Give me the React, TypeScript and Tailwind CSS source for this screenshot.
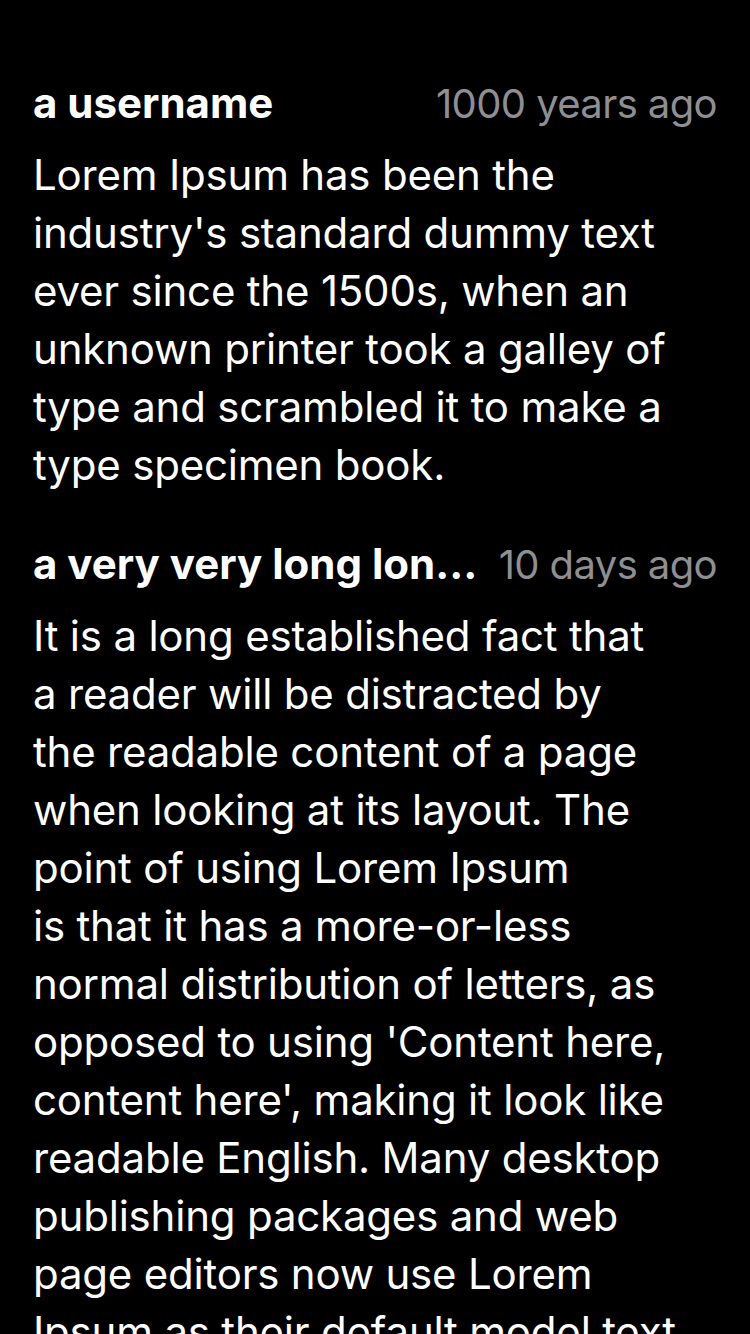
import React from "react";

type Comment = { user: string; time: string; lines: string[] };

const comments: Comment[] = [
  {
    user: "a username",
    time: "1000 years ago",
    lines: [
      "Lorem Ipsum has been the",
      "industry's standard dummy text",
      "ever since the 1500s, when an",
      "unknown printer took a galley of",
      "type and scrambled it to make a",
      "type specimen book.",
    ],
  },
  {
    user: "a very very long long long long username",
    time: "10 days ago",
    lines: [
      "It is a long established fact that",
      "a reader will be distracted by",
      "the readable content of a page",
      "when looking at its layout. The",
      "point of using Lorem Ipsum",
      "is that it has a more-or-less",
      "normal distribution of letters, as",
      "opposed to using 'Content here,",
      "content here', making it look like",
      "readable English. Many desktop",
      "publishing packages and web",
      "page editors now use Lorem",
      "Ipsum as their default model text,",
      "and a search for 'lorem ipsum'",
    ],
  },
];

export default function App() {
  return (
    <div
      className="w-[750px] h-[1334px] overflow-hidden bg-black text-white"
      style={{ fontFamily: "Inter, 'Noto Sans', sans-serif" }}
    >
      <div className="flex flex-col gap-[41px] px-[33px] pt-[74px]">
        {comments.map((c, i) => (
          <div key={i} className="flex flex-col">
            <div className="flex items-baseline gap-[20px] leading-[58px] mb-[13px]">
              <span className="flex-1 min-w-0 truncate font-bold text-[42px] tracking-[0px]">{c.user}</span>
              <span className="shrink-0 text-[40px] tracking-[-0.6px] text-[#8e8e93]">{c.time}</span>
            </div>
            <div className="text-[42px] leading-[58px] tracking-[-0.2px]">
              {c.lines.map((l, j) => (
                <div key={j} className="whitespace-nowrap">
                  {l}
                </div>
              ))}
            </div>
          </div>
        ))}
      </div>
    </div>
  );
}
